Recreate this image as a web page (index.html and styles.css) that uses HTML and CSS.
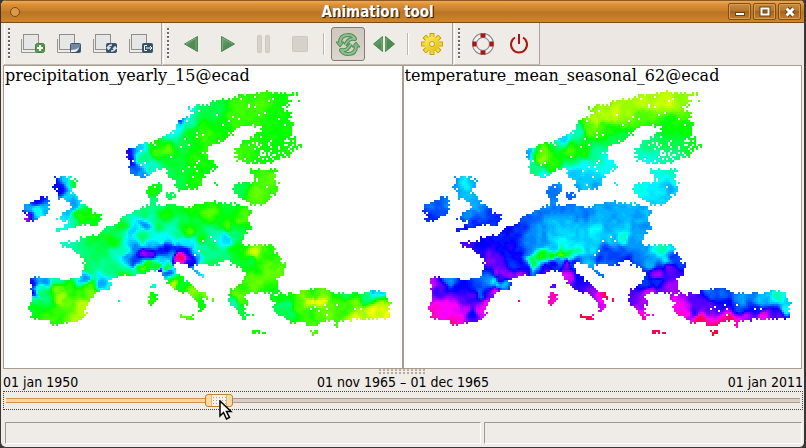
FILE: index.html
```html
<!DOCTYPE html>
<html lang="en">
<head>
<meta charset="utf-8">
<title>Animation tool</title>
<link rel="stylesheet" href="styles.css">
</head>
<body>
<svg class="defs" aria-hidden="true">
  <defs>
    <linearGradient id="green" x1="0" y1="0" x2="1" y2="1"><stop offset="0" stop-color="#7bab76"/><stop offset=".5" stop-color="#4f8c56"/><stop offset="1" stop-color="#4a8753"/></linearGradient>
    <linearGradient id="gold" gradientUnits="userSpaceOnUse" x1="4" y1="2" x2="20" y2="22"><stop offset="0" stop-color="#fdf36a"/><stop offset="1" stop-color="#e3b505"/></linearGradient>
    <g id="frames">
      <path d="M1.5 7v13.500h16" fill="none" stroke="#959595"/>
      <rect x="3.500" y="2.500" width="15" height="15" fill="#e6e6e6" stroke="#8f8f8f"/>
    </g>
    <g id="turn">
      <path d="M5 11q0-8 8-8 5 0 7 4-5-1-7 2l-3 4" fill="none" stroke="#4b8c57" stroke-width="4"/>
      <path d="M1 10h8l-4 5z" fill="#82b67c" stroke="#4b8c57"/>
      <path d="M5 11q0-8 8-8 5 0 7 4-5-1-7 2l-3 4" fill="none" stroke="#8fc087" stroke-width="2"/>
    </g>
    <rect id="tooth" x="10" y="1.500" width="4" height="6"/>
  </defs>
</svg>
<div class="window">
  <header class="titlebar">
    <button class="window-menu" aria-label="Window menu"></button>
    <h1>Animation tool</h1>
    <div class="window-buttons">
      <button aria-label="Minimize"><svg width="14" height="12"><rect x="2.500" y="6.500" width="9" height="3" fill="#fff" stroke="#6d4112"/></svg></button>
      <button aria-label="Maximize"><svg width="14" height="12"><rect x="3.500" y="2.500" width="7" height="6" fill="none" stroke="#6d4112" stroke-width="4"/><rect x="3.500" y="2.500" width="7" height="6" fill="none" stroke="#fff" stroke-width="2"/></svg></button>
      <button aria-label="Close"><svg width="14" height="12"><path d="M3.500 2.500l7 7m0-7l-7 7" stroke="#6d4112" stroke-width="5"/><path d="M3.500 2.500l7 7m0-7l-7 7" stroke="#fff" stroke-width="3"/></svg></button>
    </div>
  </header>

  <div class="toolbars">
    <div class="toolbar" role="toolbar" aria-label="Data">
      <span class="grip"></span>
      <button aria-label="Add new animation"><svg width="26" height="24"><use href="#frames"/><rect x="15.500" y="11.500" width="9" height="9" rx="2" fill="#599a4f" stroke="#3e7d3d"/><path d="M20 13v6m-3-3h6" stroke="#fff" stroke-width="2"/></svg></button>
      <button aria-label="Edit animation"><svg width="26" height="24"><use href="#frames"/><rect x="14.500" y="11.500" width="10" height="9" rx="1" fill="#7289a1" stroke="#3d566e"/><path d="M15 20h5q4-2 4-7v7z" fill="#35506b"/><path d="M15 20v-2q6 0 8-3-1 4-4 5z" fill="#eef1f4"/></svg></button>
      <button aria-label="Reload maps"><svg width="26" height="24"><use href="#frames"/><rect x="14.500" y="11.500" width="10" height="9" rx="1" fill="#35506b" stroke="#3d566e"/><path d="M16 16q0-3 4-3M15 15l1.500 2 2-2M23 16q0 3-4 3M21 17l2-2 1.500 2" fill="none" stroke="#dfe6eb" stroke-width="1.500"/></svg></button>
      <button aria-label="Export animation"><svg width="26" height="24"><use href="#frames"/><rect x="14.500" y="11.500" width="10" height="9" rx="1" fill="#35506b" stroke="#3d566e"/><path d="M19 13.500h-2.500v5h2.500M18 16h6m-2-2l2 2-2 2" fill="none" stroke="#fff"/></svg></button>
    </div>
    <div class="toolbar" role="toolbar" aria-label="Playback">
      <span class="grip"></span>
      <button aria-label="Play backward"><svg width="24" height="24"><path d="M17.500 4.500v15L4.500 12z" fill="url(#green)" stroke="#4b8852" stroke-linejoin="round"/><path d="M6 12l10-6v12" fill="none" stroke="#7eae78"/></svg></button>
      <button aria-label="Play forward"><svg width="24" height="24"><path d="M5.500 4.500v15l13-7.500z" fill="url(#green)" stroke="#4b8852" stroke-linejoin="round"/><path d="M6.500 18V6l10 6" fill="none" stroke="#7eae78"/></svg></button>
      <button aria-label="Pause" disabled><svg width="24" height="24" fill="#d6d2ca" stroke="#cdc9c1"><rect x="5.500" y="3.500" width="4" height="17" rx="1"/><rect x="13.500" y="3.500" width="4" height="17" rx="1"/></svg></button>
      <button aria-label="Stop" disabled><svg width="24" height="24"><rect x="4.500" y="4.500" width="15" height="15" rx="1" fill="#d6d2ca" stroke="#cdc9c1"/></svg></button>
      <span class="separator"></span>
      <button class="pressed" aria-label="Repeat" aria-pressed="true"><svg width="26" height="24" stroke-linejoin="round"><use href="#turn"/><use href="#turn" transform="rotate(180 13 12.500)"/></svg></button>
      <button aria-label="Play back and forth"><svg width="26" height="24" fill="url(#green)" stroke="#4b8852" stroke-linejoin="round"><path d="M11.500 4.500v15L2.500 12zM14.500 4.500v15l9-7.500z"/><path d="M11 6v12M15 6v12" stroke="#7eae78"/></svg></button>
      <span class="separator"></span>
      <button aria-label="Change speed"><svg width="24" height="24">
        <g fill="#f3d93a" stroke="#c9a302">
          <use href="#tooth"/><use href="#tooth" transform="rotate(45 12 12)"/><use href="#tooth" transform="rotate(90 12 12)"/><use href="#tooth" transform="rotate(135 12 12)"/>
          <use href="#tooth" transform="rotate(180 12 12)"/><use href="#tooth" transform="rotate(225 12 12)"/><use href="#tooth" transform="rotate(270 12 12)"/><use href="#tooth" transform="rotate(315 12 12)"/>
        </g>
        <circle cx="12" cy="12" r="7.500" fill="url(#gold)"/><circle cx="12" cy="12" r="2.500" fill="#efebe6" stroke="#c9a302"/>
      </svg></button>
    </div>
    <div class="toolbar" role="toolbar" aria-label="Miscellaneous">
      <span class="grip"></span>
      <button aria-label="Help"><svg width="24" height="24" fill="none"><circle cx="12" cy="12" r="8.500" stroke="#85858a" stroke-width="5"/><circle cx="12" cy="12" r="8.500" stroke="#f2f2f2" stroke-width="3"/><path d="M9.500 3.500h5M9.500 20.500h5M3.500 9.500v5M20.500 9.500v5" stroke="#ad1515" stroke-width="4"/></svg></button>
      <button aria-label="Quit"><svg width="24" height="24" fill="none" stroke="#ad1515" stroke-width="2"><path d="M12 2v10M8 5.500a8 8 0 1 0 8 0"/></svg></button>
    </div>
  </div>

  <main class="views">
    <section class="view">
      <h2>precipitation_yearly_15@ecad</h2>
      <svg class="map" data-layer="precipitation" viewBox="0 18 1170 792" role="img" aria-label="Precipitation over Europe"></svg>
    </section>
    <section class="view">
      <h2>temperature_mean_seasonal_62@ecad</h2>
      <svg class="map" data-layer="temperature" viewBox="0 18 1170 792" role="img" aria-label="Temperature over Europe"></svg>
    </section>
  </main>

  <div class="sash"></div>
  <div class="dates">
    <span>01 jan 1950</span>
    <label for="time">01 nov 1965 – 01 dec 1965</label>
    <span>01 jan 2011</span>
  </div>
  <div class="slider">
    <input id="time" type="range" min="0" max="732" value="190">
    <svg class="pointer" width="14" height="20" aria-hidden="true"><path d="M1 1v15l3.500-3.500L7.500 19l3-1.500-3-6H12z" fill="#fff" stroke="#000" stroke-width="1.500"/></svg>
  </div>
  <footer class="status"><div></div><div></div></footer>
</div>
<script src="map.js"></script>
</body>
</html>
```
FILE: styles.css
```css
* { box-sizing: border-box; }
body {
  margin: 0;
  background: #3b3633;
  font: 14px/17px "DejaVu Sans Condensed", "DejaVu Sans", sans-serif;
  font-stretch: condensed;
  color: #000;
}
button { margin: 0; padding: 0; border: 0; background: none; font: inherit; }
button svg { display: block; }
.defs { position: absolute; width: 0; height: 0; }
.window {
  display: flex;
  flex-direction: column;
  min-height: 100vh;
  border: solid #3b3633;
  border-width: 0 2px 1px 1px;
  border-radius: 6px;
  background: #efebe6;
  overflow: hidden;
}

/* Title bar */
.titlebar {
  display: grid;
  grid-template-columns: 1fr auto 1fr;
  align-items: center;
  height: 23px;
  padding: 0 3px 0 9px;
  border-top: 1px solid #8a5a20;
  border-bottom: 1px solid #7c4c14;
  background: linear-gradient(#f0a850, #d98d35 20%, #c67e2a 48%, #b97425 52%, #d18529);
}
.titlebar h1 {
  margin: 0;
  padding-right: 56px;
  font-size: 15px;
  line-height: 18px;
  color: #fff;
  text-shadow: 1px 1px 1px #3c2408, 1px 1px 0 #5a3811;
}
.window-menu {
  width: 10px;
  height: 10px;
  border: 1px solid #7c4c14;
  border-radius: 5px;
  background: #dc9a4c;
}
.window-buttons { display: flex; justify-content: flex-end; gap: 2px; }
.window-buttons button {
  display: grid;
  place-items: center;
  width: 23px;
  height: 17px;
  border: 1px solid #7d4f1c;
  border-radius: 2px;
  box-shadow: inset 0 0 0 1px #d99b52;
  background: linear-gradient(#c98b42, #b4742a 50%, #a5651c 50%, #c08033);
}

/* Toolbars */
.toolbars { display: flex; height: 42px; padding-left: 3px; background: #ece7e3; }
.toolbar {
  display: flex;
  align-items: center;
  padding-right: 2px;
  border-right: 1px solid #aaa39b;
  border-bottom: 1px solid #c4bdb5;
  box-shadow: inset 1px 0 #fff;
  background: #efebe6;
}
.toolbar + .toolbar { margin-left: 1px; }
.grip {
  width: 11px;
  height: 31px;
  background: repeating-linear-gradient(#706c68 0 2px, #fff 2px 3px, transparent 3px 4px) 4px 0 / 2px 100% no-repeat;
}
.toolbar button { display: grid; place-items: center; width: 36px; height: 36px; }
.toolbar .pressed {
  width: 34px;
  height: 34px;
  margin: 0 1px;
  border: 1px solid #857b72;
  border-radius: 3px;
  background: linear-gradient(#cfc7be, #ddd6cf);
}
.separator { width: 2px; height: 22px; margin: 0 5px; border-left: 1px solid #bdb7b0; background: #fff; }

/* Map views */
.views {
  flex: 1;
  display: grid;
  grid-template-columns: 1fr 1fr;
  gap: 2px;
  margin: 0 2px;
  border: 1px solid #aa9c8f;
  background: #aa9c8f;
}
.view { min-width: 0; background: #fff; }
.view h2 {
  margin: 0;
  padding-left: 1px;
  font: 16px/20px "DejaVu Serif", serif;
  white-space: nowrap;
}
.map { display: block; width: 98%; margin-left: 6px; shape-rendering: crispEdges; }

/* Time slider */
.sash {
  width: 48px;
  height: 5px;
  margin: 0 auto;
  background: radial-gradient(circle at 1px 1px, #b5aca3 1px, transparent 1px) 0 0 / 4px 3px;
}
.dates {
  display: flex;
  justify-content: space-between;
  padding: 0 1px 0 2px;
}
.slider {
  position: relative;
  height: 19px;
  margin: 0 1px 0 2px;
  border: 1px dotted #444;
}
.slider input {
  display: block;
  appearance: none;
  width: calc(100% - 4px);
  height: 17px;
  margin: 0 2px;
  background: linear-gradient(90deg, #ffd39a 27%, #d8cec4 27%) center / 100% 3px no-repeat,
    linear-gradient(90deg, #d4934a 27%, #aa9c8f 27%) center / 100% 5px no-repeat;
  outline: 0;
}
.slider input::-webkit-slider-thumb {
  appearance: none;
  width: 28px;
  height: 13px;
  border: 1px solid #c1812f;
  border-radius: 3px;
  background: linear-gradient(90deg, #ffd9a8 5px, #e9b678 5px 6px, transparent 6px 20px, #e9b678 20px 21px, #ffd9a8 21px),
    conic-gradient(from 270deg at 1px 1px, #aaa198 90deg, transparent 90deg) 10px 2px / 3px 3px, #f4f0ea;
}
.pointer { position: absolute; left: 27%; top: 8px; z-index: 1; }
.status {
  display: grid;
  grid-template-columns: 3fr 2fr;
  gap: 3px;
  padding: 12px 2px 3px 4px;
}
.status div {
  height: 22px;
  border: 1px solid #9e9991;
  border-right-color: #fff;
  border-bottom-color: #fff;
}
```
FILE: map.js
```js
// Outlines of the land areas, as x,y pairs in the maps' viewBox units.
const land = [
  // Norway, Sweden, Finland
  "348 210 385 195 440 185 445 175 490 155 497 140 505 120 530 112 555 97 540 95 540 80 570 75 600 72 610 62 650 58 680 52 690 42 760 40 765 28 780 38 840 38 870 42 868 46 830 50 832 56 868 58 868 62 835 65 840 75 820 82 822 90 845 97 835 115 848 130 848 165 830 168 855 175 860 188 878 197 860 210 840 222 825 235 790 240 790 248 740 250 710 248 700 242 675 238 680 220 672 205 690 198 700 185 750 155 750 140 700 138 680 145 668 162 650 178 620 188 590 205 590 235 610 245 625 262 590 280 575 300 575 320 545 330 510 330 495 320 492 300 475 295 472 272 455 262 425 280 400 292 375 288 360 275 358 245 350 235",
  "718 268 810 268 795 280 800 300 810 330 790 345 760 375 730 378 720 370 690 355 672 335 668 320 685 310 720 305 735 312 738 290 718 278",
  "415 325 430 310 455 303 455 325 440 345 440 378 420 375 412 345",
  "470 340 490 335 495 350 480 362 470 355",
  "612 300 620 300 620 314 612 314",
  // Continental mainland
  "155 487 215 485 210 465 225 475 270 460 290 440 325 430 345 405 375 390 420 375 475 375 540 380 600 365 650 370 715 375 725 400 712 410 728 440 705 465 697 490 710 497 790 495 795 515 812 530 812 550 840 555 822 565 820 585 800 600 810 635 850 638 850 643 745 637 710 640 700 655 715 672 700 685 704 700 725 700 725 706 704 706 708 722 695 725 690 708 680 690 655 670 658 630 680 618 700 610 703 580 690 560 665 555 655 540 640 537 625 555 550 555 560 570 595 595 570 590 540 560 520 545 492 555 500 575 530 605 565 630 600 650 615 662 578 650 585 680 570 698 565 670 545 650 500 630 470 605 455 580 440 570 415 575 390 585 340 590 315 590 300 600 300 625 270 635 240 655 225 690 230 705 190 730 150 728 130 738 120 720 62 718 65 690 52 685 70 650 58 600 70 592 130 595 215 595 225 565 220 540 195 510 155 497",
  // Turkey
  "780 642 850 645 880 630 940 622 975 640 1060 640 1090 630 1122 632 1128 645 1140 665 1135 690 1147 715 1050 718 990 722 979 745 974 726 940 724 910 740 870 722 850 735 830 718 800 705 790 690 795 665 780 655",
  // Great Britain and Ireland
  "130 290 170 288 200 305 195 325 175 335 200 345 215 370 240 380 250 400 278 408 262 435 200 440 165 450 130 457 145 445 175 425 140 420 160 395 185 385 175 365 145 355 140 330 118 322 140 310",
  "45 375 85 358 92 350 120 352 118 400 85 415 70 425 38 420 55 410 42 390",
  // Mediterranean islands
  "422 608 434 606 433 628 422 624",
  "415 648 428 638 440 645 438 665 425 680 414 678",
  "495 703 530 706 552 704 545 724 530 716",
  "718 750 735 752 772 756 772 761 740 762 718 755",
  "900 758 930 750 922 766 902 766",
  "296 664 312 668 306 674 298 670",
  "325 660 331 660 331 666 325 666",
  "655 580 662 580 662 586 655 586"
].map(s => s.split(" ").map(Number));

// Readings as x, y, hue; values in between are interpolated.
const readings = {
  precipitation: "350 232 270 362 240 235 365 270 215 400 288 205 385 205 190 400 235 150 440 215 108 470 210 98 510 125 225 500 142 185 530 135 150 525 112 200 530 160 130 480 160 175 580 140 115 540 150 120 580 170 104 600 210 112 560 240 115 430 265 165 480 240 130 500 300 135 560 310 114 620 90 135 680 95 104 750 75 104 800 100 118 840 150 118 700 130 108 720 200 112 800 200 118 690 235 104 770 230 120 785 290 98 740 345 97 690 335 140 800 270 115 130 315 238 140 328 240 160 300 190 190 310 130 170 350 190 190 370 205 210 410 115 250 410 112 170 405 195 150 440 170 85 360 240 50 378 205 48 420 285 85 395 170 115 400 195 430 330 115 440 370 150 540 380 114 600 400 104 700 410 105 650 440 108 475 400 118 400 395 145 340 440 125 400 435 205 365 450 190 380 500 205 430 465 170 400 470 140 300 480 120 250 480 130 170 490 160 270 520 140 340 520 165 310 560 145 220 560 140 360 530 205 378 550 235 405 525 285 425 520 275 385 540 235 450 510 240 470 508 238 490 508 238 510 508 238 530 515 240 510 533 345 520 538 345 535 550 245 550 570 200 560 520 195 450 540 185 490 532 190 485 550 140 455 488 170 490 488 165 530 492 180 420 495 190 360 575 150 400 560 95 415 548 110 440 560 110 450 572 270 480 580 220 470 562 120 510 595 120 500 465 150 450 440 140 540 450 105 575 480 115 640 475 190 655 478 190 620 470 160 670 470 140 610 500 145 580 520 150 600 545 140 680 510 120 735 520 70 720 550 130 760 520 108 780 520 112 790 570 98 740 600 98 700 630 110 690 650 90 670 670 165 695 705 135 720 620 96 490 610 75 510 620 125 550 635 85 590 650 90 575 680 125 520 708 98 350 590 105 70 610 235 78 640 245 110 605 205 90 625 160 85 660 140 220 600 205 275 607 200 150 600 160 100 640 140 180 620 112 240 622 98 140 630 92 150 655 75 200 640 108 250 640 92 80 680 118 130 700 112 180 690 98 220 680 75 120 725 108 200 720 80 425 660 115 820 680 145 800 650 125 840 700 140 900 630 115 890 665 60 910 667 60 930 668 60 890 650 105 920 652 110 960 680 100 870 680 105 920 690 110 900 705 115 1000 640 145 1080 635 195 1110 632 190 1060 645 150 1040 670 90 1000 680 110 1090 690 65 1120 680 70 1040 715 68 1140 715 58 740 757 115 910 760 100",
  temperature: "355 225 200 370 265 150 400 240 90 395 215 95 480 210 105 520 215 115 430 250 110 400 288 180 460 175 190 500 160 160 540 140 95 560 125 75 620 100 70 590 110 78 580 140 105 600 150 115 650 90 82 700 75 76 740 70 74 780 65 72 830 55 85 840 100 100 700 110 102 780 130 118 840 150 120 620 180 140 560 220 155 600 240 180 520 260 180 720 190 148 690 220 165 780 190 135 860 195 125 800 235 150 720 245 175 540 300 190 500 280 195 560 320 200 790 290 165 750 330 185 680 330 175 780 320 200 160 315 180 190 310 200 125 320 210 165 350 195 200 370 200 180 405 205 250 410 228 200 430 230 150 450 235 85 385 220 50 420 230 430 330 213 480 350 218 450 390 212 520 400 210 600 400 205 700 400 200 700 450 205 380 400 215 330 435 232 280 460 236 230 490 240 165 492 255 300 500 245 240 540 270 260 580 280 310 555 225 290 580 280 330 590 290 330 530 245 380 460 205 430 435 195 400 490 210 430 505 200 480 460 190 560 450 182 560 480 185 640 475 165 610 475 195 665 485 200 600 440 200 640 510 222 590 515 225 640 540 238 560 540 230 380 555 130 375 540 145 360 520 215 350 560 240 400 530 110 425 526 110 450 523 90 475 521 130 480 502 185 500 520 160 550 505 190 425 550 250 400 555 250 440 540 210 500 540 230 470 550 275 410 570 260 470 590 295 510 600 245 540 550 195 570 575 210 550 640 270 590 650 345 575 680 290 520 712 345 690 530 210 755 510 155 775 545 180 720 550 195 800 530 225 780 570 265 740 580 275 735 610 230 790 620 280 700 610 225 665 650 260 690 680 280 695 710 315 720 640 290 65 610 285 120 603 205 90 630 255 150 630 240 180 660 255 210 620 220 225 603 205 245 604 180 265 608 180 285 612 190 270 595 260 260 630 300 215 650 215 230 670 300 90 680 305 130 690 300 160 690 285 190 700 240 215 695 300 130 725 320 70 710 315 428 615 260 425 660 320 800 670 300 815 700 310 850 660 255 850 700 250 900 640 215 940 640 220 900 690 262 940 670 240 1000 660 200 1050 660 195 1100 650 165 1130 690 175 990 690 225 1040 690 235 960 720 350 1000 710 290 1060 710 300 1110 710 260 870 720 340 1140 714 230 910 760 350 740 757 340 310 668 345"
};

const CELL = 6;

function noise(x, y) {
  const n = Math.sin(x * 12.9898 + y * 78.233) * 43758.5453;
  return n - Math.floor(n);
}

// Noise that varies smoothly over distances of about `size` units.
function terrain(x, y, size) {
  const gx = Math.floor(x / size), gy = Math.floor(y / size);
  const fx = x / size - gx, fy = y / size - gy;
  const top = noise(gx, gy) * (1 - fx) + noise(gx + 1, gy) * fx;
  const bottom = noise(gx, gy + 1) * (1 - fx) + noise(gx + 1, gy + 1) * fx;
  return top * (1 - fy) + bottom * fy - 0.5;
}

function inside(poly, x, y) {
  let hit = false;
  for (let i = 0, j = poly.length - 2; i < poly.length; j = i, i += 2) {
    const xi = poly[i], yi = poly[i + 1], xj = poly[j], yj = poly[j + 1];
    if ((yi > y) !== (yj > y) && x < (xj - xi) * (y - yi) / (yj - yi) + xi) hit = !hit;
  }
  return hit;
}

// Chance that a cell of land has no data: high over the lakes of Finland.
function gapChance(x, y) {
  if (x > 725 && y > 178 && y < 250) return 0.22;
  if (y < 330 && x > 340) return 0.025;
  if (x > 860 && y > 670 && y < 705) return 0.04;
  return 0.002;
}

function hueAt(points, x, y) {
  let sum = 0, weight = 0;
  for (let i = 0; i < points.length; i += 3) {
    const dx = points[i] - x, dy = points[i + 1] - y;
    const w = 1 / Math.pow(dx * dx + dy * dy + 40, 1.6);
    sum += w * points[i + 2];
    weight += w;
  }
  return sum / weight;
}

document.querySelectorAll(".map").forEach(svg => {
  const points = readings[svg.dataset.layer].split(" ").map(Number);
  const paths = {};
  for (let y = 24; y < 780; y += CELL) {
    for (let x = 30; x < 1160; x += CELL) {
      const cx = x + 3 + (noise(x, y) - 0.5) * 10;
      const cy = y + 3 + (noise(y, x) - 0.5) * 8;
      if (!land.some(p => inside(p, cx, cy))) continue;
      if (noise(x + 7, y + 3) < gapChance(x, y)) continue;
      // Shift the lookup point a little so that zones get uneven borders.
      const sx = x + 3 + terrain(x, y, 22) * 24;
      const sy = y + 3 + terrain(y + 500, x, 22) * 16;
      const rough = y > 370 ? 14 : 8;
      const hue = hueAt(points, sx, sy) + terrain(x + 90, y, 14) * rough;
      const key = Math.round(hue / 3) * 3;
      paths[key] = (paths[key] || "") + `M${x} ${y}h${CELL}v${CELL}h-${CELL}z`;
    }
  }
  for (const key in paths) {
    const path = document.createElementNS("http://www.w3.org/2000/svg", "path");
    path.setAttribute("d", paths[key]);
    path.setAttribute("fill", `hsl(${key} 100% 50%)`);
    svg.append(path);
  }
});
```
